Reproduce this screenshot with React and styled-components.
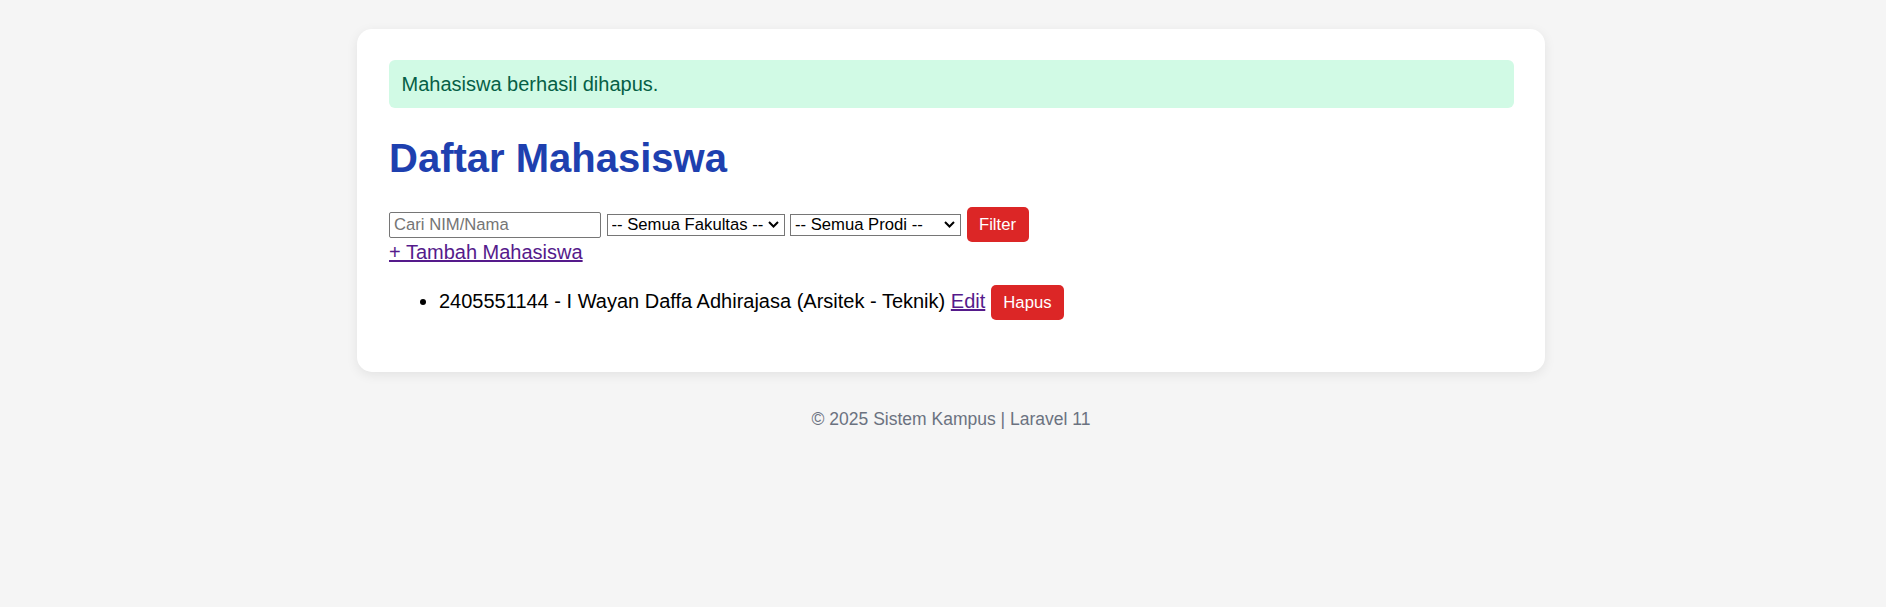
import React from "react";
import styled, { createGlobalStyle } from "styled-components";

const GlobalStyle = createGlobalStyle`
  html, body {
    margin: 0;
    background: #f5f5f5;
  }
  body {
    font-family: "Liberation Sans", Arial, sans-serif;
    font-size: 20px;
    color: #000;
  }
`;

const chevron =
  "data:image/svg+xml," +
  encodeURIComponent(
    '<svg xmlns="http://www.w3.org/2000/svg" width="11" height="7" viewBox="0 0 11 7"><path d="M1 1l4.5 4.5L10 1" fill="none" stroke="#000" stroke-width="2"/></svg>'
  );

const Page = styled.div`
  min-height: 607px;
  box-sizing: border-box;
  padding: 29px 0 0 16px;
  display: flex;
  flex-direction: column;
  align-items: center;
`;

const Card = styled.main`
  width: 1188px;
  box-sizing: border-box;
  background: #fff;
  border-radius: 15px;
  padding: 31px 31px 32px 32px;
  box-shadow: 0 3px 12px rgba(0, 0, 0, 0.08);
`;

const Alert = styled.div`
  background: #d1fae5;
  color: #065f46;
  padding: 12.5px;
  border-radius: 6px;
  line-height: 23px;
`;

const Title = styled.h1`
  margin: 27px 0;
  font-size: 40px;
  line-height: 46px;
  font-weight: 700;
  color: #1e40af;
`;

const FilterForm = styled.form`
  display: flex;
  align-items: center;
  gap: 5.5px;
  height: 33px;
`;

const SearchInput = styled.input`
  box-sizing: border-box;
  width: 212px;
  height: 26px;
  padding: 0 4px;
  border: 1px solid #767676;
  border-radius: 2px;
  font-family: inherit;
  font-size: 16.67px;
  color: #000;
  &::placeholder {
    color: #757575;
  }
`;

const Select = styled.select`
  appearance: none;
  -webkit-appearance: none;
  box-sizing: border-box;
  width: ${(p) => p.$width}px;
  height: 22px;
  padding: 0 20px 0 4px;
  border: 1px solid #767676;
  border-radius: 0;
  background: #fff url("${chevron}") no-repeat right 5px center / 11px 7px;
  font-family: inherit;
  font-size: 16.67px;
  color: #000;
`;

const DangerButton = styled.button`
  display: inline-block;
  border: none;
  border-radius: 5px;
  background: #dc2626;
  color: #fff;
  padding: 8px 12.5px;
  font-family: inherit;
  font-size: 16.67px;
  line-height: 19px;
  cursor: pointer;
`;

const TextLink = styled.a`
  color: #551a8b;
  text-decoration: underline;
`;

const AddRow = styled.div`
  line-height: 23px;
`;

const StudentList = styled.ul`
  margin: 21px 0 20px;
  padding-left: 50px;
`;

const StudentItem = styled.li`
  line-height: 23px;
`;

const Footer = styled.footer`
  width: 1188px;
  margin-top: 37px;
  text-align: center;
  font-size: 17.5px;
  color: #6b7280;
`;

const students = [
  { nim: "2405551144", nama: "I Wayan Daffa Adhirajasa", prodi: "Arsitek", fakultas: "Teknik" },
];

export default function App() {
  return (
    <>
      <GlobalStyle />
      <Page>
        <Card>
          <Alert>Mahasiswa berhasil dihapus.</Alert>
          <Title>Daftar Mahasiswa</Title>
          <FilterForm onSubmit={(e) => e.preventDefault()}>
            <SearchInput type="text" placeholder="Cari NIM/Nama" />
            <Select $width={178} defaultValue="">
              <option value="">-- Semua Fakultas --</option>
            </Select>
            <Select $width={171} defaultValue="">
              <option value="">-- Semua Prodi --</option>
            </Select>
            <DangerButton type="submit">Filter</DangerButton>
          </FilterForm>
          <AddRow>
            <TextLink href="#">+ Tambah Mahasiswa</TextLink>
          </AddRow>
          <StudentList>
            {students.map((s) => (
              <StudentItem key={s.nim}>
                {s.nim} - {s.nama} ({s.prodi} - {s.fakultas}){" "}
                <TextLink href="#">Edit</TextLink>{" "}
                <DangerButton type="button">Hapus</DangerButton>
              </StudentItem>
            ))}
          </StudentList>
        </Card>
        <Footer>© 2025 Sistem Kampus | Laravel 11</Footer>
      </Page>
    </>
  );
}
